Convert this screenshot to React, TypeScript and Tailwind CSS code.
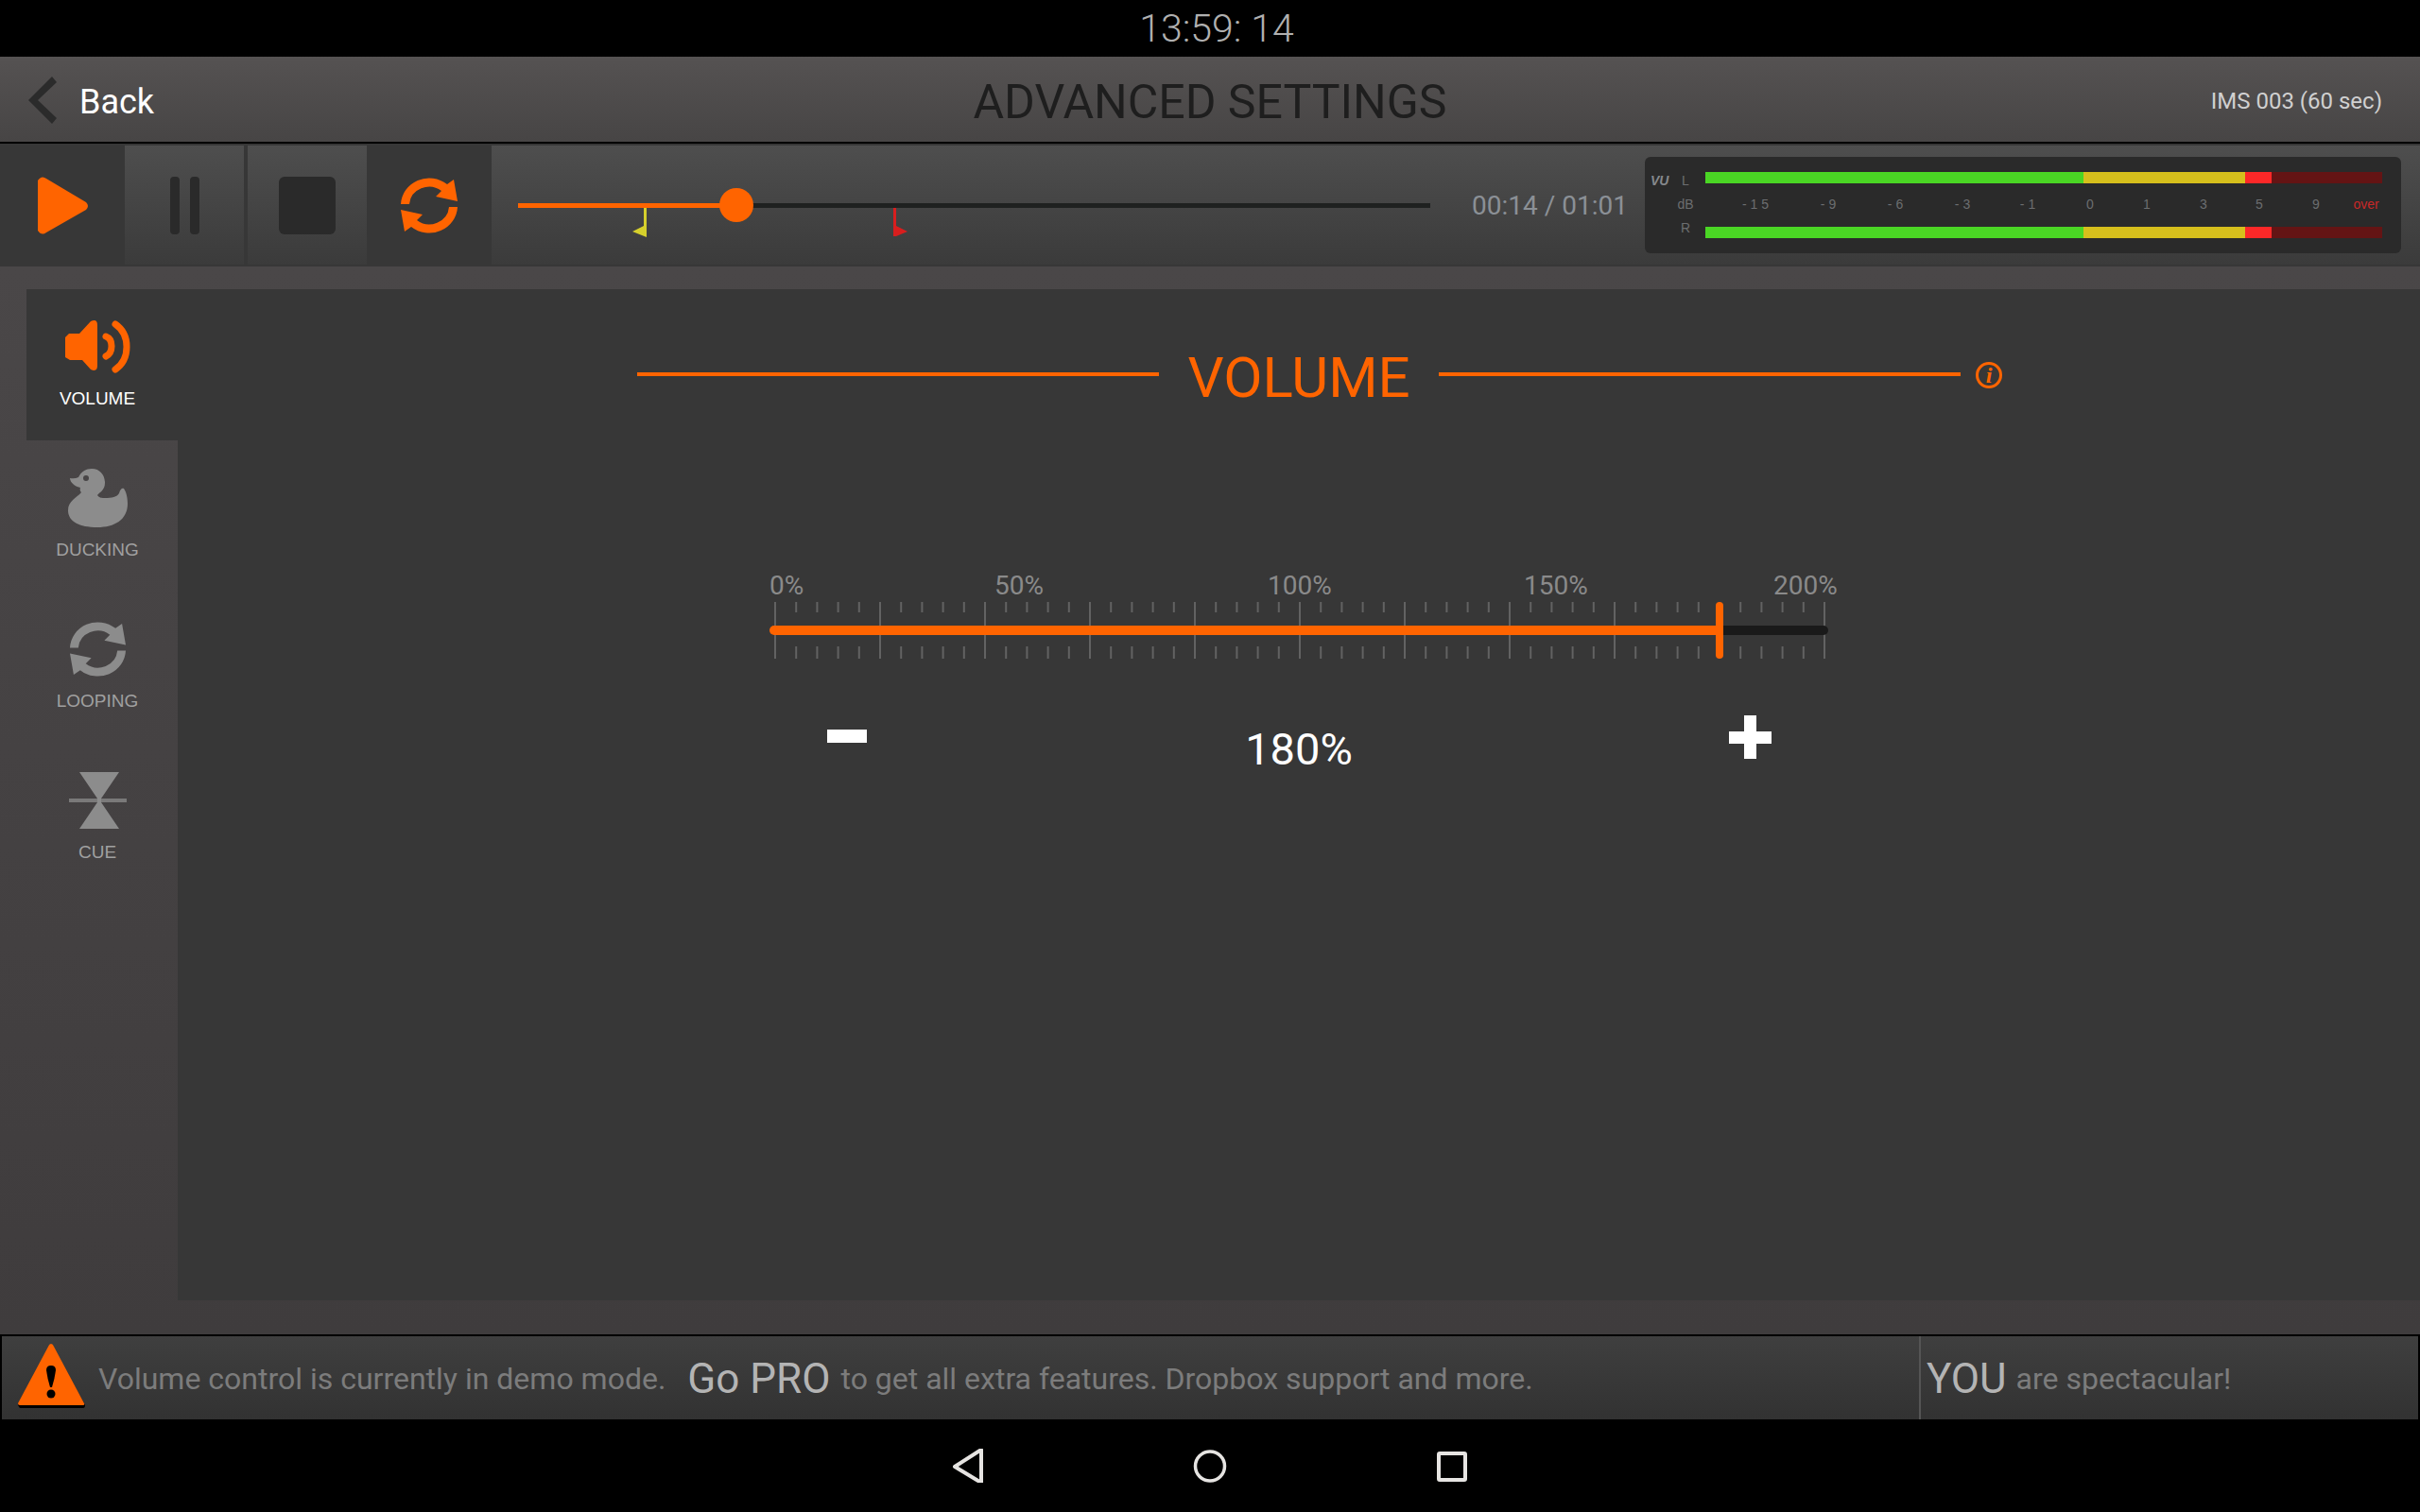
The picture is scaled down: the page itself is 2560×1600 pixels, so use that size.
import { useState } from "react"
import type { ReactNode } from "react"
import clsx from "clsx"

function LoopIcon({ className }: { className?: string }) {
  const arrow = "M0 29 A30 29 0 0 1 49 8 L56 3 L60 26 L37 21 L43 15 A21 20 0 0 0 9 29 Z"
  return (
    <svg viewBox="0 0 60 61" fill="currentColor" className={className} aria-hidden="true">
      <path d={arrow} />
      <path d={arrow} transform="rotate(180 30 30.5)" />
    </svg>
  )
}

function SpeakerIcon() {
  return (
    <svg viewBox="0 0 69 56" className="h-[56px] w-[69px]" fill="currentColor" aria-hidden="true">
      <path d="M4 14 H15 L27 1 Q34 -2 34 5 V48 Q34 55 27 52 L18 42 H5 L0 39 V18 Z" />
      <path
        d="M43 17 C51 20 51 34 43 38 M53 4 C69 15 69 41 53 52"
        fill="none"
        stroke="currentColor"
        strokeWidth="7"
        strokeLinecap="round"
      />
    </svg>
  )
}

function DuckIcon() {
  return (
    <svg viewBox="0 0 63 62" className="h-[62px] w-[63px]" fill="currentColor" aria-hidden="true">
      <path
        fillRule="evenodd"
        d="M2 10 Q7 11 11 9 C14 3 19 0 25 0 C34 0 39 7 39 15 C39 23 33 25 31 28 C33 31 36 31 39 31 C46 31 52 30 54 26 C55 22 57 20 59 21 C62 25 63 32 63 37 C63 54 49 62 31 62 C12 62 0 56 0 44 C0 34 9 31 14 25 Q12 23 13 20 C8 19 2 15 2 10 Z M19 7 A3 3 0 1 0 19 13 A3 3 0 1 0 19 7 Z"
      />
    </svg>
  )
}

function CueIcon() {
  return (
    <svg viewBox="0 0 61 60" className="h-[60px] w-[61px]" fill="currentColor" aria-hidden="true">
      <path d="M0 28 H61 V32 H0 Z" opacity="0.75" />
      <path d="M11 0 H53 L34 28 V32 L53 60 H11 L30 32 V28 Z" />
    </svg>
  )
}

function WarningIcon() {
  return (
    <svg viewBox="0 0 71 68" className="mb-1 h-[68px] w-[71px] shrink-0" aria-hidden="true">
      <path d="M35 2 Q37 2 38 5 L71 65 Q71 68 69 68 H2 L0 65 Z" fill="#000" />
      <path d="M35 0 Q37 0 38 3 L70 63 Q71 65 68 65 H2 Q0 65 0 63 L32 3 Q33 0 35 0 Z" fill="#ff6400" />
      <path d="M35 23 Q40 23 40 28 Q39 36 36 46 H34 Q31 36 30 28 Q30 23 35 23 Z" fill="#000" />
      <circle cx="35" cy="53" r="4.5" fill="#000" />
    </svg>
  )
}

const TRACK =
  "appearance-none bg-transparent m-0 [&::-webkit-slider-thumb]:appearance-none [&::-webkit-slider-thumb]:bg-[#ff6400]"

function TransportButton({ label, active, children }: { label: string; active?: boolean; children: ReactNode }) {
  return (
    <button
      aria-label={label}
      className={clsx(
        "flex shrink-0 items-center justify-center",
        active ? "w-[132px] bg-[#373737] text-[#ff6400]" : "w-[126px] text-[#2a2a2a]"
      )}
    >
      {children}
    </button>
  )
}

function Seek() {
  const [pos, setPos] = useState(14)
  return (
    <div className="relative ml-7 flex flex-1 items-center">
      <input
        type="range"
        aria-label="Position"
        min={0}
        max={61}
        value={pos}
        onChange={(e) => setPos(Number(e.target.value))}
        style={{
          backgroundImage: `linear-gradient(to right, #ff6400 ${(pos / 61) * 100}%, #1f2120 ${(pos / 61) * 100}%)`,
        }}
        className={clsx(
          TRACK,
          "relative z-10 h-[5px] w-full [&::-webkit-slider-thumb]:size-9 [&::-webkit-slider-thumb]:rounded-full"
        )}
      />
      <svg viewBox="0 0 16 34" className="absolute top-1/2 left-[12.5%] h-[34px] w-4" aria-hidden="true">
        <path d="M12 0 H15 V34 L0 28 L12 22 Z" fill="#d6d02c" />
      </svg>
      <svg viewBox="0 0 16 34" className="absolute top-1/2 left-[41%] h-[34px] w-4" aria-hidden="true">
        <path d="M1 0 H4 V22 L16 28 L4 33 H1 Z" fill="#d81e1e" />
      </svg>
    </div>
  )
}

function MeterBar() {
  return (
    <div className="flex h-3">
      <div className="grow-[400] bg-[#4ad624]" />
      <div className="grow-[171] bg-[#d6bf1c]" />
      <div className="grow-[28] bg-[#fc2828]" />
      <div className="grow-[117] bg-[#641414]" />
    </div>
  )
}

const DB_MARKS = ["- 1 5", "- 9", "- 6", "- 3", "- 1", "0", "1", "3", "5", "9"]

function VuMeter() {
  return (
    <div className="mt-3 mr-5 ml-[18px] flex h-[102px] w-[800px] shrink-0 rounded-md bg-[#2a2a2a] py-4 pr-5 font-['Liberation_Sans',sans-serif] text-[14px] leading-4 text-[#6c6e70]">
      <div className="w-8 pt-px pl-[6px] font-bold text-[#85888c] italic">VU</div>
      <div className="flex w-8 flex-col items-center justify-between pt-px pr-[10px] pb-[3px]">
        <span>L</span>
        <span>dB</span>
        <span>R</span>
      </div>
      <div className="flex flex-1 flex-col justify-between">
        <MeterBar />
        <div className="grid grid-cols-[78fr_76fr_66fr_76fr_62fr_70fr_50fr_70fr_48fr_72fr_34fr] pb-[2px] pl-[14px] text-center whitespace-nowrap">
          {DB_MARKS.map((m) => (
            <span key={m}>{m}</span>
          ))}
          <span className="text-[#c82828]">over</span>
        </div>
        <MeterBar />
      </div>
    </div>
  )
}

const TABS = [
  { label: "VOLUME", icon: <SpeakerIcon /> },
  { label: "DUCKING", icon: <DuckIcon /> },
  { label: "LOOPING", icon: <LoopIcon className="h-[60px] w-[63px]" /> },
  { label: "CUE", icon: <CueIcon /> },
]

function Sidebar() {
  return (
    <nav className="ml-7 flex w-40 shrink-0 flex-col">
      {TABS.map((tab, i) => (
        <button
          key={tab.label}
          className={clsx(
            "flex h-40 flex-col items-center pt-[30px] pr-[10px] font-['Liberation_Sans',sans-serif] text-[19px] leading-6",
            i === 0 ? "bg-[#373737] text-[#ff6400]" : "text-[#8c8c8c]"
          )}
        >
          <span className="flex h-[62px] items-center">{tab.icon}</span>
          <span className={clsx("mt-3", i === 0 ? "text-white" : "text-[#a0a0a0]")}>{tab.label}</span>
        </button>
      ))}
    </nav>
  )
}

// 50 divisions over 200%, with a long mark on every fifth
function Ruler() {
  const ticks = Array.from({ length: 51 }, (_, i) => i)
  return (
    <svg
      viewBox="0 0 1120 60"
      preserveAspectRatio="none"
      className="col-start-1 row-start-1 h-[60px] w-full"
      aria-hidden="true"
    >
      {ticks.map((i) => {
        const x = 6 + i * 22.2
        return (
          <path
            key={i}
            d={i % 5 === 0 ? `M${x} 0 V60` : `M${x} 0 V11 M${x} 47 V60`}
            stroke="#626262"
            strokeWidth="2"
          />
        )
      })}
    </svg>
  )
}

function VolumePanel() {
  const [volume, setVolume] = useState(180)
  const fill = (volume / 200) * 100

  return (
    <main className="flex flex-1 flex-col items-center bg-[#373737]">
      <div className="relative mt-[54px] flex w-[1400px] max-w-full items-center gap-[30px]">
        <div className="mb-2 h-1 flex-1 bg-[#ff6400]" />
        <h2 className="text-[60px] leading-[80px] text-[#ff6400]">VOLUME</h2>
        <div className="mb-2 h-1 flex-1 bg-[#ff6400]" />
        <button
          aria-label="Info"
          className="absolute top-[23px] left-full ml-4 flex size-7 items-center justify-center rounded-full border-3 border-[#ff6400] font-['Liberation_Serif',serif] text-[24px] leading-6 font-bold text-[#ff6400] italic"
        >
          i
        </button>
      </div>

      <div className="mt-[164px] w-[1120px] max-w-full">
        <div className="grid grid-cols-[238fr_289fr_271fr_264fr_minmax(0,58fr)] pb-px text-[28px] leading-8 text-[#8a8a8a]">
          <span>0%</span>
          <span>50%</span>
          <span>100%</span>
          <span>150%</span>
          <span>200%</span>
        </div>
        <div className="grid items-center">
          <Ruler />
          <input
            type="range"
            aria-label="Volume"
            min={0}
            max={200}
            value={volume}
            onChange={(e) => setVolume(Number(e.target.value))}
            style={{ backgroundImage: `linear-gradient(to right, #ff6400 ${fill}%, #1a1a1a ${fill}%)` }}
            className={clsx(
              TRACK,
              "col-start-1 row-start-1 h-[10px] w-full rounded-full [&::-webkit-slider-thumb]:h-[60px] [&::-webkit-slider-thumb]:w-2 [&::-webkit-slider-thumb]:rounded-sm"
            )}
          />
        </div>
        <div className="mt-[60px] flex items-start justify-between px-[60px] text-white">
          <button
            aria-label="Decrease volume"
            className="flex size-[46px] items-center justify-center"
            onClick={() => setVolume((v) => Math.max(0, v - 1))}
          >
            <svg viewBox="0 0 46 46" className="size-full" fill="currentColor">
              <path d="M1 15 H43 V29 H1 Z" />
            </svg>
          </button>
          <output className="mt-2 text-[47px] leading-[56px]">{volume}%</output>
          <button
            aria-label="Increase volume"
            className="flex size-[46px] items-center justify-center"
            onClick={() => setVolume((v) => Math.min(200, v + 1))}
          >
            <svg viewBox="0 0 46 46" className="size-full" fill="currentColor">
              <path d="M17 0 H30 V17 H46 V30 H30 V46 H17 V30 H1 V17 H17 Z" />
            </svg>
          </button>
        </div>
      </div>
    </main>
  )
}

export default function App() {
  return (
    <div className="flex min-h-screen flex-col bg-black font-[Roboto,sans-serif]">
      <div className="flex h-[60px] items-center justify-center">
        <time className="pl-[14px] text-[41px] leading-none font-light whitespace-pre text-[#b0b0b0]">13:59: 14</time>
      </div>

      <header className="grid h-[92px] grid-cols-[1fr_auto_1fr] items-center border-b-2 border-black bg-linear-to-b from-[#555252] to-[#474545]">
        <button className="flex items-center gap-6 justify-self-start pt-[2px] pl-[30px] text-[36px] leading-10 text-white">
          <svg viewBox="0 0 30 50" className="h-[50px] w-[30px]" aria-hidden="true">
            <path d="M25 0 L30 6 L10 25 L30 44 L25 50 L0 25 Z" fill="#2b2b2b" />
          </svg>
          <span className="pt-1">Back</span>
        </button>
        <h1 className="pt-[6px] text-[50px] leading-[60px] text-[#1e1e1e]">ADVANCED SETTINGS</h1>
        <span className="justify-self-end pt-1 pr-10 text-[24px] leading-8 text-[#d0d0d0]">IMS 003 (60 sec)</span>
      </header>

      <div className="flex h-[130px] border-y-2 border-[#373737] bg-linear-to-b from-[#4e4e4e] to-[#3b3b3b]">
        <TransportButton label="Play" active>
          <svg viewBox="0 0 53 61" className="h-[61px] w-[53px]" fill="currentColor">
            <path d="M0 4 Q4 -2 9 2 L51 27 Q55 31 51 35 L9 59 Q4 63 0 57 Z" />
          </svg>
        </TransportButton>
        <TransportButton label="Pause">
          <svg viewBox="0 0 31 61" className="h-[61px] w-[31px]" fill="currentColor">
            <rect width="10" height="61" rx="4" />
            <rect x="21" width="10" height="61" rx="4" />
          </svg>
        </TransportButton>
        <div className="w-1 shrink-0 bg-[#373737]" />
        <TransportButton label="Stop">
          <span className="h-[61px] w-[60px] rounded-md bg-[#2a2a2a]" />
        </TransportButton>
        <TransportButton label="Loop" active>
          <LoopIcon className="h-[61px] w-[60px]" />
        </TransportButton>
        <Seek />
        <span className="ml-[44px] self-center pt-[2px] text-[28px] leading-8 whitespace-nowrap text-[#8b9096]">
          00:14 / 01:01
        </span>
        <VuMeter />
      </div>

      <div className="flex flex-1 bg-linear-to-b from-[#4a4748] to-[#3f3c3d] pt-6 pb-9">
        <Sidebar />
        <VolumePanel />
      </div>

      <footer className="flex h-[90px] items-center border-x-2 border-t-2 border-x-black border-t-black bg-linear-to-b from-[#3f3f3f] to-[#323232] text-[32px] leading-10 whitespace-nowrap text-[#7c7c7c]">
        <div className="flex flex-1 items-center pl-[17px]">
          <WarningIcon />
          <p className="ml-[14px] flex items-center pt-[2px]">
            Volume control is currently in demo mode.
            <a href="#pro" className="mr-[11px] ml-[23px] text-[44px] text-[#b4b4b4]">
              Go PRO
            </a>
            to get all extra features. Dropbox support and more.
          </p>
        </div>
        <p className="flex w-[528px] items-center gap-[10px] self-stretch border-l-2 border-[#555] pt-[2px] pl-[6px]">
          <span className="text-[44px] text-[#b4b4b4]">YOU</span>
          are spectacular!
        </p>
      </footer>

      <nav className="flex h-[98px] items-center justify-center gap-[220px] text-[#e6e4e2]">
        <button aria-label="Back" className="size-9">
          <svg viewBox="0 0 36 36" fill="none" stroke="currentColor" strokeWidth="4" strokeLinejoin="round">
            <path d="M32 1 V36 L4 19 Z" />
          </svg>
        </button>
        <button aria-label="Home" className="size-9">
          <svg viewBox="0 0 36 36" fill="none" stroke="currentColor" strokeWidth="3.5">
            <circle cx="18" cy="18.5" r="15.5" />
          </svg>
        </button>
        <button aria-label="Recent apps" className="size-9">
          <svg viewBox="0 0 36 36" fill="none" stroke="currentColor" strokeWidth="4">
            <rect x="4" y="5" width="28" height="28" rx="1" />
          </svg>
        </button>
      </nav>
    </div>
  )
}
